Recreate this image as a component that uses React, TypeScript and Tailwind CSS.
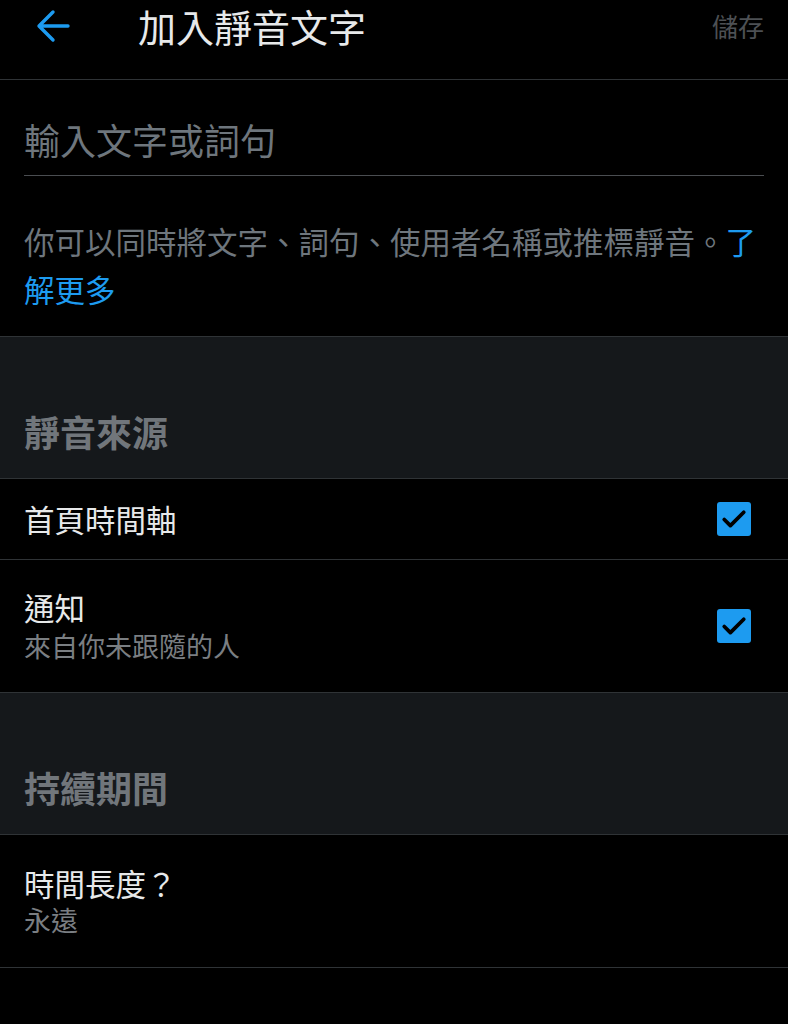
const font = "font-['Noto_Sans_CJK_TC','Noto_Sans',sans-serif]";

function Check() {
  return (
    <div className="w-[34px] h-[34px] rounded-[3px] bg-[#1d9bf0] flex items-center justify-center">
      <svg width="30" height="30" viewBox="0 0 24 24" fill="none">
        <path d="M4.2 12.4l4.9 4.9L19.8 6.6" stroke="#000" strokeWidth="3" strokeLinecap="round" strokeLinejoin="round" />
      </svg>
    </div>
  );
}

function SectionHeader({ title }: { title: string }) {
  return (
    <div className="bg-[#15181b] border-b border-[#2f3336] px-6 pt-[76px] pb-[29px]">
      <div className="text-[36px] leading-[36px] font-bold text-[#71767b]">{title}</div>
    </div>
  );
}

export default function App() {
  return (
    <div className={`min-h-[1024px] w-full bg-black ${font}`}>
      {/* top bar */}
      <div className="h-[80px] border-b border-[#2f3336]">
        <div className="flex items-center h-[52px]">
          <svg className="ml-[36px]" width="34" height="34" viewBox="0 0 34 34" fill="none">
            <path d="M32 17H4M17 3L3 17l14 14" stroke="#1d9bf0" strokeWidth="3.4" strokeLinecap="round" strokeLinejoin="round" />
          </svg>
          <div className="ml-[68px] text-[38px] leading-[40px] text-[#e7e9ea]">加入靜音文字</div>
          <div className="ml-auto mr-[24px] text-[26px] leading-[30px] text-[#4d5054]">儲存</div>
        </div>
      </div>

      {/* input */}
      <div className="px-6">
        <div className="pt-[40px] pb-[17px] border-b border-[#4a4d51] text-[36px] leading-[38px] text-[#6e767d]">
          輸入文字或詞句
        </div>
      </div>

      {/* hint */}
      <div className="px-6 pt-[41px] pb-[23px] border-b border-[#2f3336] text-[30.5px] leading-[48px] text-[#6e767d]">
        你可以同時將文字、詞句、使用者名稱或推標靜音。<span className="text-[#1d9bf0]">了解更多</span>
      </div>

      <SectionHeader title="靜音來源" />

      <div className="h-[81px] border-b border-[#2f3336] flex items-center justify-between pl-6 pr-[37px]">
        <div className="text-[30.5px] leading-[36px] text-[#e7e9ea]">首頁時間軸</div>
        <Check />
      </div>

      <div className="h-[133px] border-b border-[#2f3336] flex items-center justify-between pl-6 pr-[37px]">
        <div>
          <div className="text-[30.5px] leading-[36px] text-[#e7e9ea]">通知</div>
          <div className="mt-[4px] text-[27px] leading-[34px] text-[#7a7e82]">來自你未跟隨的人</div>
        </div>
        <Check />
      </div>

      <SectionHeader title="持續期間" />

      <div className="h-[133px] border-b border-[#2f3336] flex items-center pl-6">
        <div>
          <div className="text-[30.5px] leading-[36px] text-[#e7e9ea]">時間長度？</div>
          <div className="mt-[2px] text-[27px] leading-[34px] text-[#7a7e82]">永遠</div>
        </div>
      </div>
    </div>
  );
}
